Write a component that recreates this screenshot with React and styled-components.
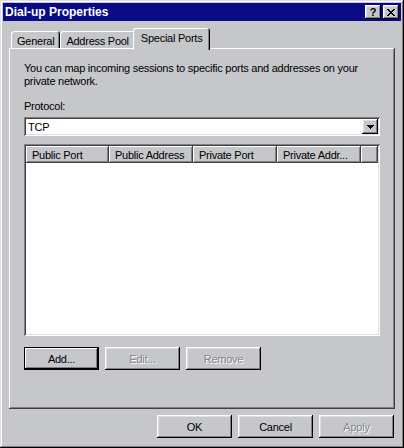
import React from "react";
import styled, { createGlobalStyle } from "styled-components";

const face = "#c6c7ca";

const GlobalStyle = createGlobalStyle`
  body {
    margin: 0;
    background: ${face};
    font-family: "Liberation Sans", Arial, sans-serif;
  }
`;

const raised = `inset -1px -1px #000, inset 1px 1px #fff, inset -2px -2px #808080, inset 2px 2px #dfdfdf`;
const sunken = `inset 1px 1px #808080, inset -1px -1px #fff, inset 2px 2px #404040, inset -2px -2px #dfdfdf`;

const Window = styled.div`
  width: 404px;
  height: 448px;
  box-sizing: border-box;
  padding: 3px;
  display: flex;
  flex-direction: column;
  background: ${face};
  font-size: 11px;
  letter-spacing: -0.25px;
  color: #000;
  box-shadow: inset -1px -1px #000, inset 1px 1px #dfdfdf, inset -2px -2px #808080, inset 2px 2px #fff;
`;

const TitleBar = styled.div`
  height: 18px;
  display: flex;
  align-items: center;
  padding: 0 2px;
  background: #0a0a86;
  color: #fff;
`;

const TitleText = styled.div`
  flex: 1;
  font-weight: bold;
  font-size: 12px;
  letter-spacing: 0;
`;

const CaptionButton = styled.div`
  width: 16px;
  height: 14px;
  box-sizing: border-box;
  margin-left: ${(p) => p.$gap}px;
  display: flex;
  align-items: center;
  justify-content: center;
  background: ${face};
  color: #000;
  font-weight: bold;
  font-size: 11px;
  letter-spacing: 0;
  box-shadow: ${raised};
`;

const Content = styled.div`
  flex: 1;
  display: flex;
  flex-direction: column;
  padding: 7px 6px 7px;
`;

const TabRow = styled.div`
  height: 20px;
  display: flex;
  align-items: flex-end;
  padding-left: 2px;
  position: relative;
  z-index: 1;
`;

const Tab = styled.div`
  height: ${(p) => (p.$active ? 22 : 17)}px;
  box-sizing: border-box;
  margin: 0 ${(p) => (p.$active ? -2 : 0)}px ${(p) => (p.$active ? -2 : 0)}px;
  padding: ${(p) => (p.$active ? "0 8px 2px" : "2px 6px 0")};
  display: flex;
  align-items: center;
  white-space: nowrap;
  background: ${face};
  border-radius: 3px 3px 0 0;
  box-shadow: inset 1px 1px #fff, inset -1px 0 #000, inset -2px 0 #808080;
`;

const Panel = styled.div`
  flex: 1;
  display: flex;
  flex-direction: column;
  padding: 14px 15px 0;
  background: ${face};
  box-shadow: inset -1px -1px #404040, inset 1px 1px #fff, inset -2px -2px #808080;
`;

const Text = styled.div`
  line-height: 13px;
  margin-top: ${(p) => p.$top || 0}px;
`;

const Combo = styled.div`
  margin-top: 4px;
  height: 19px;
  box-sizing: border-box;
  padding: 2px;
  display: flex;
  align-items: center;
  background: #fff;
  box-shadow: ${sunken};
`;

const ComboText = styled.div`
  flex: 1;
  padding-left: 2px;
`;

const DropButton = styled.div`
  width: 16px;
  height: 15px;
  display: flex;
  align-items: center;
  justify-content: center;
  background: ${face};
  box-shadow: ${raised};
`;

const List = styled.div`
  margin-top: 8px;
  height: 192px;
  box-sizing: border-box;
  padding: 2px;
  background: #fff;
  box-shadow: ${sunken};
`;

const HeaderRow = styled.div`
  display: flex;
  height: 17px;
`;

const HeaderCell = styled.div`
  width: ${(p) => (p.$w ? `${p.$w}px` : "auto")};
  flex: ${(p) => (p.$w ? "none" : 1)};
  box-sizing: border-box;
  padding-left: 6px;
  display: flex;
  align-items: center;
  white-space: nowrap;
  overflow: hidden;
  background: ${face};
  box-shadow: inset -1px -1px #404040, inset 1px 1px #fff, inset -2px -2px #808080;
`;

const ButtonRow = styled.div`
  display: flex;
  gap: 6px;
  margin-top: ${(p) => p.$top}px;
  justify-content: ${(p) => (p.$end ? "flex-end" : "flex-start")};
  padding-right: ${(p) => (p.$end ? 1 : 0)}px;
`;

const Button = styled.div`
  width: 75px;
  height: 23px;
  box-sizing: border-box;
  display: flex;
  align-items: center;
  justify-content: center;
  background: ${face};
  color: ${(p) => (p.$disabled ? "#868686" : "#000")};
  text-shadow: ${(p) => (p.$disabled ? "1px 1px 0 #fff" : "none")};
  box-shadow: ${(p) =>
    p.$default
      ? "inset 0 0 0 1px #000, inset -2px -2px #000, inset 2px 2px #fff, inset -3px -3px #808080"
      : raised};
`;

const CloseGlyph = () => (
  <svg width="8" height="7" viewBox="0 0 8 7" shapeRendering="crispEdges">
    <path
      fill="#000"
      d="M0 0h2v1H0zM6 0h2v1H6zM1 1h2v1H1zM5 1h2v1H5zM2 2h4v1H2zM3 3h2v1H3zM2 4h4v1H2zM1 5h2v1H1zM5 5h2v1H5zM0 6h2v1H0zM6 6h2v1H6z"
    />
  </svg>
);

const DownArrow = () => (
  <svg width="7" height="4" viewBox="0 0 7 4" shapeRendering="crispEdges">
    <path fill="#000" d="M0 0h7v1H0zM1 1h5v1H1zM2 2h3v1H2zM3 3h1v1H3z" />
  </svg>
);

const columns = [
  { label: "Public Port", w: 83 },
  { label: "Public Address", w: 84 },
  { label: "Private Port", w: 84 },
  { label: "Private Addr...", w: 84 },
];

const App = () => {
  return (
    <>
      <GlobalStyle />
      <Window>
        <TitleBar>
          <TitleText>Dial-up Properties</TitleText>
          <CaptionButton $gap={0}>?</CaptionButton>
          <CaptionButton $gap={2}>
            <CloseGlyph />
          </CaptionButton>
        </TitleBar>
        <Content>
          <TabRow>
            <Tab>General</Tab>
            <Tab>Address Pool</Tab>
            <Tab $active>Special Ports</Tab>
          </TabRow>
          <Panel>
            <Text>
              You can map incoming sessions to specific ports and addresses on your
              <br />
              private network.
            </Text>
            <Text $top={12}>Protocol:</Text>
            <Combo>
              <ComboText>TCP</ComboText>
              <DropButton>
                <DownArrow />
              </DropButton>
            </Combo>
            <List>
              <HeaderRow>
                {columns.map((c) => (
                  <HeaderCell key={c.label} $w={c.w}>
                    {c.label}
                  </HeaderCell>
                ))}
                <HeaderCell />
              </HeaderRow>
            </List>
            <ButtonRow $top={11}>
              <Button $default>Add...</Button>
              <Button $disabled>Edit...</Button>
              <Button $disabled>Remove</Button>
            </ButtonRow>
          </Panel>
          <ButtonRow $top={6} $end>
            <Button>OK</Button>
            <Button>Cancel</Button>
            <Button $disabled>Apply</Button>
          </ButtonRow>
        </Content>
      </Window>
    </>
  );
};

export default App;
